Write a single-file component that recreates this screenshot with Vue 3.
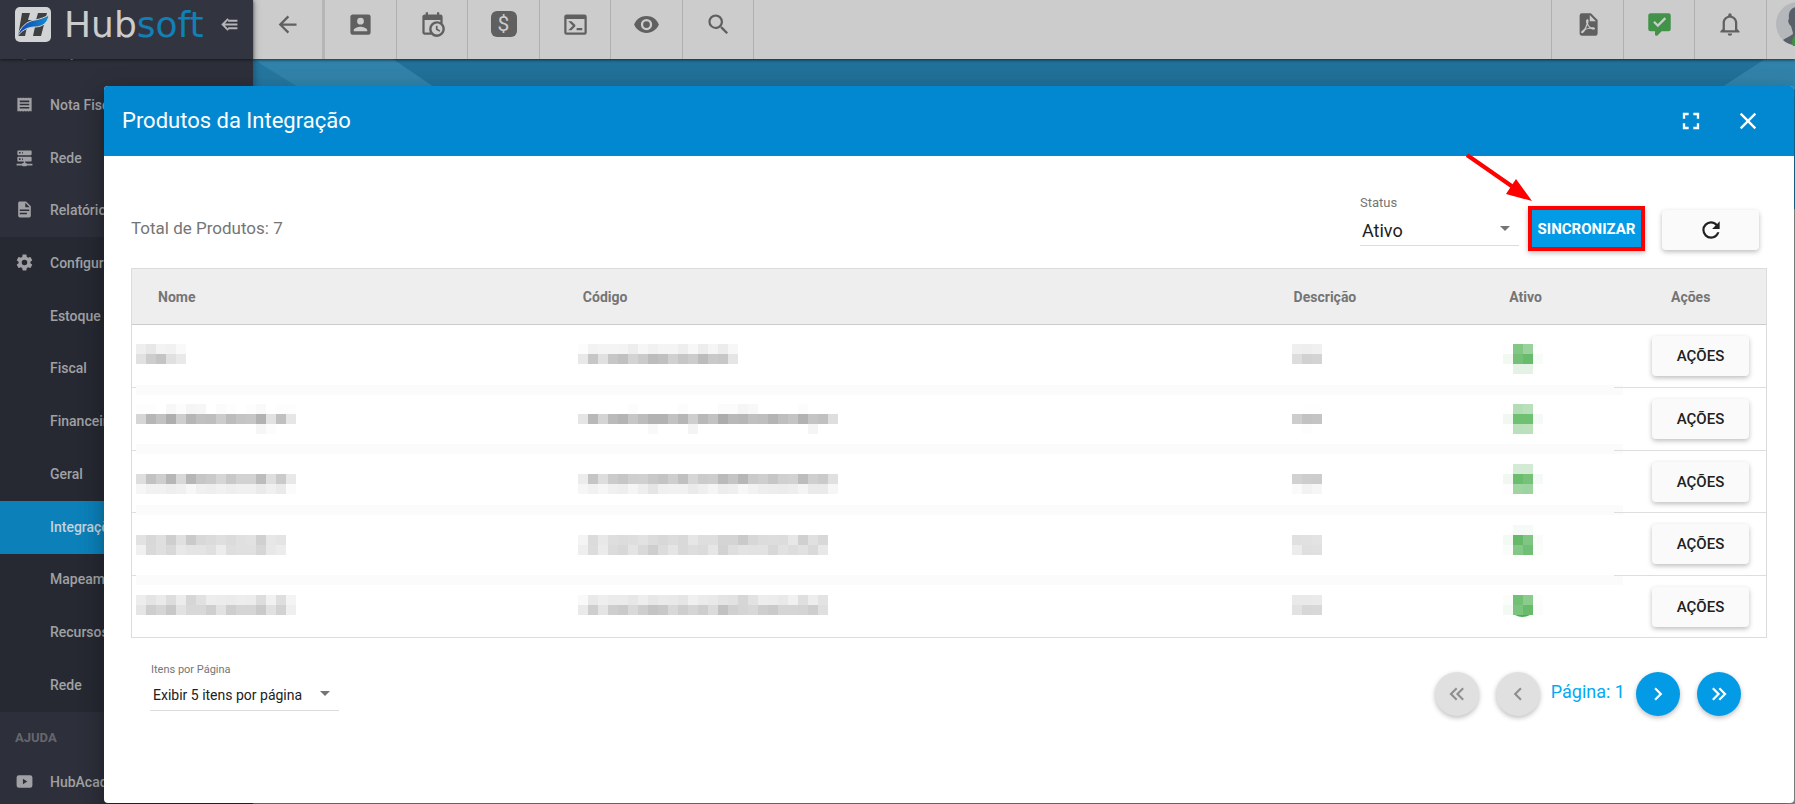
<script setup>
import { ref } from 'vue'

const icons = {
  back: 'M20,11V13H8L13.5,18.5L12.08,19.92L4.16,12L12.08,4.08L13.5,5.5L8,11H20Z',
  account: 'M6,17C6,15 10,13.9 12,13.9C14,13.9 18,15 18,17V18H6M15,9A3,3 0 0,1 12,12A3,3 0 0,1 9,9A3,3 0 0,1 12,6A3,3 0 0,1 15,9M3,5V19A2,2 0 0,0 5,21H19A2,2 0 0,0 21,19V5A2,2 0 0,0 19,3H5C3.89,3 3,3.9 3,5Z',
  calendar: 'M15,13H16.5V15.82L18.94,17.23L18.19,18.53L15,16.69V13M19,8H5V19H9.67C9.24,18.09 9,17.07 9,16A7,7 0 0,1 16,9C17.07,9 18.09,9.24 19,9.67V8M5,21C3.89,21 3,20.1 3,19V5C3,3.89 3.89,3 5,3H6V1H8V3H16V1H18V3H19A2,2 0 0,1 21,5V11.1C22.24,12.36 23,14.09 23,16A7,7 0 0,1 16,23C14.09,23 12.36,22.24 11.1,21H5M16,11.15A4.85,4.85 0 0,0 11.15,16C11.15,18.68 13.32,20.85 16,20.85A4.85,4.85 0 0,0 20.85,16C20.85,13.32 18.68,11.15 16,11.15Z',
  console: 'M20,19V7H4V19H20M20,3A2,2 0 0,1 22,5V19A2,2 0 0,1 20,21H4A2,2 0 0,1 2,19V5C2,3.89 2.9,3 4,3H20M13,17V15H18V17H13M9.58,13L5.57,9H8.4L11.7,12.3C12.09,12.69 12.09,13.33 11.7,13.72L8.42,17H5.59L9.58,13Z',
  eye: 'M12,9A3,3 0 0,0 9,12A3,3 0 0,0 12,15A3,3 0 0,0 15,12A3,3 0 0,0 12,9M12,17A5,5 0 0,1 7,12A5,5 0 0,1 12,7A5,5 0 0,1 17,12A5,5 0 0,1 12,17M12,4.5C7,4.5 2.73,7.61 1,12C2.73,16.39 7,19.5 12,19.5C17,19.5 21.27,16.39 23,12C21.27,7.61 17,4.5 12,4.5Z',
  search: 'M9.5,3A6.5,6.5 0 0,1 16,9.5C16,11.11 15.41,12.59 14.44,13.73L14.71,14H15.5L20.5,19L19,20.5L14,15.5V14.71L13.73,14.44C12.59,15.41 11.11,16 9.5,16A6.5,6.5 0 0,1 3,9.5A6.5,6.5 0 0,1 9.5,3M9.5,5C7,5 5,7 5,9.5C5,12 7,14 9.5,14C12,14 14,12 14,9.5C14,7 12,5 9.5,5Z',
  pdf: 'M14,9H19.5L14,3.5V9M7,2H15L21,8V20A2,2 0 0,1 19,22H7C5.89,22 5,21.1 5,20V4A2,2 0 0,1 7,2M11.93,12.44C12.34,13.34 12.86,14.08 13.46,14.59L13.87,14.91C13,15.07 11.8,15.35 10.53,15.84V15.84L10.42,15.88L10.92,14.84C11.37,13.97 11.7,13.18 11.93,12.44M18.41,16.25C18.59,16.07 18.68,15.84 18.69,15.59C18.72,15.39 18.67,15.2 18.57,15.04C18.28,14.57 17.53,14.35 16.29,14.35L15,14.42L14.13,13.84C13.5,13.32 12.93,12.41 12.53,11.28L12.57,11.14C12.9,9.81 13.21,8.2 12.55,7.54C12.39,7.38 12.17,7.3 11.94,7.3H11.7C11.33,7.3 11,7.69 10.91,8.07C10.54,9.4 10.76,10.13 11.13,11.34V11.35C10.88,12.23 10.56,13.25 10.05,14.28L9.09,16.08L8.2,16.57C7,17.32 6.43,18.16 6.32,18.69C6.28,18.88 6.3,19.05 6.37,19.23L6.4,19.28L6.88,19.59L7.32,19.7C8.13,19.7 9.05,18.75 10.29,16.63L10.47,16.56C11.5,16.23 12.78,16 14.5,15.81C15.53,16.32 16.74,16.55 17.5,16.55C17.94,16.55 18.24,16.44 18.41,16.25Z',
  check: 'M9,22A1,1 0 0,1 8,21V18H4A2,2 0 0,1 2,16V4C2,2.89 2.9,2 4,2H20A2,2 0 0,1 22,4V16A2,2 0 0,1 20,18H13.9L10.2,21.71C10,21.9 9.75,22 9.5,22H9M10.5,14.4L17.9,7L16.5,5.6L10.5,11.6L7.8,8.9L6.4,10.3L10.5,14.4Z',
  bell: 'M16,17H7V10.5C7,8 9,6 11.5,6C14,6 16,8 16,10.5M18,16V10.5C18,7.43 15.86,4.86 13,4.18V3.5A1.5,1.5 0 0,0 11.5,2A1.5,1.5 0 0,0 10,3.5V4.18C7.13,4.86 5,7.43 5,10.5V16L3,18V19H20V18M11.5,22A2,2 0 0,0 13.5,20H9.5A2,2 0 0,0 11.5,22Z',
  help: 'M12,2A10,10 0 1,0 12,22A10,10 0 1,0 12,2Z',
  receipt: 'M3,3L4,4L5,3L6,4L7,3L8,4L9,3L10,4L11,3L12,4L13,3L14,4L15,3L16,4L17,3L18,4L19,3L20,4L21,3V21L20,20L19,21L18,20L17,21L16,20L15,21L14,20L13,21L12,20L11,21L10,20L9,21L8,20L7,21L6,20L5,21L4,20L3,21ZM6,7V9H18V7ZM6,11V13H18V11ZM6,15V17H18V15Z',
  network: 'M13,19H14A1,1 0 0,1 15,20H22V22H15A1,1 0 0,1 14,23H10A1,1 0 0,1 9,22H2V20H9A1,1 0 0,1 10,19H11V17H4A1,1 0 0,1 3,16V12A1,1 0 0,1 4,11H20A1,1 0 0,1 21,12V16A1,1 0 0,1 20,17H13V19M4,3H20A1,1 0 0,1 21,4V8A1,1 0 0,1 20,9H4A1,1 0 0,1 3,8V4A1,1 0 0,1 4,3M9,7H10V5H9V7M9,15H10V13H9V15M5,5V7H7V5H5M5,13V15H7V13H5Z',
  file: 'M13,9H18.5L13,3.5V9M6,2H14L20,8V20A2,2 0 0,1 18,22H6C4.89,22 4,21.1 4,20V4C4,2.89 4.89,2 6,2M15,18V16H6V18H15M18,14V12H6V14H18Z',
  gear: 'M12,15.5A3.5,3.5 0 0,1 8.5,12A3.5,3.5 0 0,1 12,8.5A3.5,3.5 0 0,1 15.5,12A3.5,3.5 0 0,1 12,15.5M19.43,12.97C19.47,12.65 19.5,12.33 19.5,12C19.5,11.67 19.47,11.34 19.43,11L21.54,9.37C21.73,9.22 21.78,8.95 21.66,8.73L19.66,5.27C19.54,5.05 19.27,4.96 19.05,5.05L16.56,6.05C16.04,5.66 15.5,5.32 14.87,5.07L14.5,2.42C14.46,2.18 14.25,2 14,2H10C9.75,2 9.54,2.18 9.5,2.42L9.13,5.07C8.5,5.32 7.96,5.66 7.44,6.05L4.95,5.05C4.73,4.96 4.46,5.05 4.34,5.27L2.34,8.73C2.21,8.95 2.27,9.22 2.46,9.37L4.57,11C4.53,11.34 4.5,11.67 4.5,12C4.5,12.33 4.53,12.65 4.57,12.97L2.46,14.63C2.27,14.78 2.21,15.05 2.34,15.27L4.34,18.73C4.46,18.95 4.73,19.03 4.95,18.95L7.44,17.94C7.96,18.34 8.5,18.68 9.13,18.93L9.5,21.58C9.54,21.82 9.75,22 10,22H14C14.25,22 14.46,21.82 14.5,21.58L14.87,18.93C15.5,18.67 16.04,18.34 16.56,17.94L19.05,18.95C19.27,19.03 19.54,18.95 19.66,18.73L21.66,15.27C21.78,15.05 21.73,14.78 21.54,14.63L19.43,12.97Z',
  video: 'M5,4H19A3,3 0 0,1 22,7V17A3,3 0 0,1 19,20H5A3,3 0 0,1 2,17V7A3,3 0 0,1 5,4M10,8.5V15.5L15.5,12Z',
  refresh: 'M17.65,6.35C16.2,4.9 14.21,4 12,4A8,8 0 0,0 4,12A8,8 0 0,0 12,20C15.73,20 18.84,17.45 19.73,14H17.65C16.83,16.33 14.61,18 12,18A6,6 0 0,1 6,12A6,6 0 0,1 12,6C13.66,6 15.14,6.69 16.22,7.78L13,11H20V4L17.65,6.35Z',
  expand: 'M5,5H10V7H7V10H5V5M14,5H19V10H17V7H14V5M17,14H19V19H14V17H17V14M10,17V19H5V14H7V17H10Z',
  close: 'M19,6.41L17.59,5L12,10.59L6.41,5L5,6.41L10.59,12L5,17.59L6.41,19L12,13.41L17.59,19L19,17.59L13.41,12L19,6.41Z',
  first: 'M18.41,7.41L17,6L11,12L17,18L18.41,16.59L13.83,12L18.41,7.41M12.41,7.41L11,6L5,12L11,18L12.41,16.59L7.83,12L12.41,7.41Z',
  prev: 'M15.41,16.58L10.83,12L15.41,7.41L14,6L8,12L14,18L15.41,16.58Z',
  next: 'M8.59,16.58L13.17,12L8.59,7.41L10,6L16,12L10,18L8.59,16.58Z',
  last: 'M5.59,7.41L7,6L13,12L7,18L5.59,16.59L10.17,12L5.59,7.41M11.59,7.41L13,6L19,12L13,18L11.59,16.59L16.17,12L11.59,7.41Z',
}

const shortcuts = [
  { icon: 'account', label: 'Clientes' },
  { icon: 'calendar', label: 'Agenda' },
  { icon: 'money', label: 'Financeiro' },
  { icon: 'console', label: 'Console' },
  { icon: 'eye', label: 'Visualizar' },
  { icon: 'search', label: 'Pesquisar' },
]
const tools = [
  { icon: 'pdf', label: 'Relatórios em PDF' },
  { icon: 'check', label: 'Mensagens' },
  { icon: 'bell', label: 'Notificações' },
]
const menu = [
  { icon: 'receipt', label: 'Nota Fiscal' },
  { icon: 'network', label: 'Rede' },
  { icon: 'file', label: 'Relatórios' },
]
const settings = ['Estoque', 'Fiscal', 'Financeiro', 'Geral', 'Integrações', 'Mapeamento', 'Recursos', 'Rede']
const columns = ['Nome', 'Código', 'Descrição', 'Ativo', 'Ações']

const status = ref('Ativo')
const pageSize = ref('Exibir 5 itens por página')

// Masked values: each field is a stack of tile rows, 10px per tile.
// Numbers are grey levels, strings are colours, 255 is blank.
const _ = 255
const products = [
  {
    top: 19,
    cells: [
      [[238, 231, 243, 241, 249], [225, 205, 196, 224, 233]],
      [[252, 242, 244, 244, 243, 237, 246, 241, 244, 244, 238, 247, 237, 245, 236, 247], [232, 198, 224, 198, 192, 211, 202, 188, 192, 208, 198, 204, 188, 201, 199, 229]],
      [[239, 238, 240], [221, 209, 211]],
      [[254, '#83c785', '#9ad19c', 254], ['#f1f9f1', '#74c077', '#68bb6a', '#f8fcf8'], [_, '#e3f2e4', '#e3f2e4', _]],
    ],
  },
  {
    top: 16,
    cells: [
      [[253, 253, _, 247, 252, 245, 246, _, 251, 253, _, 253, 249, _, 253, 253], [214, 182, 194, 174, 206, 182, 192, 190, 204, 188, 196, 198, 178, 226, 192, 230], [_, _, _, _, _, _, _, _, _, _, _, _, 246, 252]],
      [[_, _, _, _, _, 252, _, _, _, _, 252, _, _, _, 251, 251, 245, 248, _, _, _, _, 252], [229, 184, 212, 186, 180, 198, 188, 178, 178, 194, 182, 206, 184, 194, 172, 184, 182, 192, 190, 180, 190, 196, 178, 196, 192, 222], [_, _, _, _, _, _, _, 249, _, _, _, 244, _, _, _, _, _, _, _, _, _, _, _, 245]],
      [[_, 254, 254], [205, 194, 196], [_, 253, _]],
      [[_, '#b3deb5', '#badfbb', _], ['#f1f8f1', '#70c072', '#70c072', '#f5faf6'], [254, '#b9e0ba', '#bbe1bc', 254]],
    ],
  },
  {
    top: 13,
    cells: [
      [[], [222, 194, 206, 182, 216, 182, 198, 202, 214, 200, 210, 210, 188, 222, 202, 232], [246, 241, 241, 238, 240, 247, 240, 238, 241, 238, 240, 240, 234, 240, 234, 251]],
      [[], [236, 197, 221, 203, 198, 207, 208, 200, 196, 206, 192, 214, 203, 205, 186, 196, 182, 202, 206, 198, 208, 210, 188, 207, 202, 224], [246, 241, 246, 240, 238, 245, 238, 229, 240, 241, 241, 234, 239, 245, 237, 239, 247, 242, 238, 237, 236, 238, 244, 234, 234, 246]],
      [[], [209, 205, 204], [250, 242, 246]],
      [[_, '#d3ebd4', '#d3ebd4', _], ['#f1f8f1', '#6abd6d', '#76c279', '#f5faf6'], [253, '#9fd5a1', '#9cd39e', 254]],
    ],
  },
  {
    top: 12,
    cells: [
      [[], [226, 216, 223, 206, 224, 202, 216, 219, 223, 219, 224, 226, 208, 231, 228], [240, 217, 223, 216, 232, 228, 228, 224, 236, 222, 224, 224, 214, 232, 236]],
      [[], [244, 219, 232, 222, 220, 222, 226, 220, 216, 220, 217, 230, 222, 222, 212, 212, 202, 215, 220, 221, 220, 231, 208, 224, 216], [238, 220, 235, 219, 216, 228, 217, 206, 220, 229, 217, 221, 219, 230, 210, 222, 227, 226, 226, 216, 225, 221, 225, 217, 232]],
      [[], [224, 225, 227], [236, 223, 224]],
      [[_, '#f5faf6', '#f5faf6', _], ['#f3f9f3', '#65b968', '#80c583', '#fafcfa'], ['#f9fcf9', '#84c887', '#71bf74', '#fbfdfb']],
    ],
  },
  {
    top: 19,
    arc: true,
    cells: [
      [[237, 228, 234, 221, 236, 214, 225, 237, 236, 235, 237, 236, 221, 241, 222, 244], [229, 206, 213, 200, 226, 216, 216, 207, 226, 206, 213, 213, 202, 225, 210, 239]],
      [[249, 233, 238, 235, 235, 231, 238, 231, 234, 233, 229, 240, 235, 233, 228, 226, 214, 226, 237, 236, 233, 241, 223, 237, 227], [234, 206, 228, 206, 202, 217, 206, 196, 200, 216, 206, 213, 206, 219, 194, 208, 213, 216, 206, 202, 213, 213, 212, 206, 223]],
      [[233, 233, 234], [226, 215, 216]],
      [['#fbfdfb', '#72c075', '#8bcb8d', 253], ['#f3faf3', '#7bc47e', '#69bb6c', '#fbfdfb']],
    ],
  },
]

const tileColor = (v) => (typeof v === 'string' ? v : `rgb(${v},${v},${v})`)
const tiles = (rows, top) =>
  rows.flatMap((row, r) =>
    row.map((v, c) => ({ x: c * 10, y: top + r * 10, fill: tileColor(v), blank: v === _ })),
  ).filter((t) => !t.blank)
</script>

<template>
  <div class="app">
    <aside class="sidebar">
      <div class="brand">
        <svg class="logo" viewBox="0 0 36 35" aria-hidden="true">
          <defs>
            <linearGradient id="swoosh" x1="0" x2="1" y1="0" y2="0">
              <stop offset="0" stop-color="#0b3fb4" />
              <stop offset="1" stop-color="#168fcb" />
            </linearGradient>
          </defs>
          <rect width="36" height="35" rx="5" fill="#d2d3d4" />
          <path d="M7 6H15L13 13H21L23 6H32L26 29H18L20 20H12L10 29H3Z" fill="#3f3f40" />
          <path d="M2 30C5 20 12 14 20 13C26 12 30 10 34 8C33 16 27 20 20 20C12 20 6 24 2 30Z" fill="url(#swoosh)" stroke="#d2d3d4" stroke-width="1" />
        </svg>
        <span class="wordmark">Hub<span class="soft">soft</span></span>
        <button class="collapse" type="button" aria-label="Recolher menu">
          <svg viewBox="0 0 18 14" aria-hidden="true">
            <path d="M7 1L1 7L7 13M1 7H17M7 3H17M7 11H17" fill="none" stroke="currentColor" stroke-width="2" />
          </svg>
        </button>
      </div>
      <nav class="menu" aria-label="Menu principal">
        <a href="#" class="item clipped">
          <svg class="glyph" viewBox="0 0 24 24" aria-hidden="true"><path :d="icons.help" /></svg>Empresa
        </a>
        <ul class="top-items">
          <li v-for="m in menu" :key="m.label">
            <a href="#" class="item">
              <svg class="glyph" viewBox="0 0 24 24" aria-hidden="true"><path fill-rule="evenodd" :d="icons[m.icon]" /></svg>{{ m.label }}
            </a>
          </li>
        </ul>
        <div class="open-group">
          <a href="#" class="item parent">
            <svg class="glyph" viewBox="0 0 24 24" aria-hidden="true"><path :d="icons.gear" /></svg>Configurações
          </a>
          <ul class="sub-items">
            <li v-for="s in settings" :key="s" :class="{ active: s === 'Integrações' }">
              <a href="#" class="item sub">{{ s }}</a>
            </li>
          </ul>
        </div>
        <h2 class="caption">AJUDA</h2>
        <a href="#" class="item academy">
          <svg class="glyph" viewBox="0 0 24 24" aria-hidden="true"><path fill-rule="evenodd" :d="icons.video" /></svg>HubAcademy
        </a>
      </nav>
    </aside>

    <div class="page">
      <header class="toolbar">
        <button class="tool back" type="button" aria-label="Voltar">
          <svg viewBox="0 0 24 24" aria-hidden="true"><path :d="icons.back" /></svg>
        </button>
        <div class="tools">
          <button v-for="s in shortcuts" :key="s.icon" class="tool" type="button" :aria-label="s.label">
            <span v-if="s.icon === 'money'" class="money">$</span>
            <svg v-else viewBox="0 0 24 24" aria-hidden="true"><path :d="icons[s.icon]" /></svg>
          </button>
        </div>
        <div class="tools right">
          <button v-for="t in tools" :key="t.icon" class="tool" :class="t.icon" type="button" :aria-label="t.label">
            <svg viewBox="0 0 24 24" aria-hidden="true"><path fill-rule="evenodd" :d="icons[t.icon]" /></svg>
          </button>
          <button class="avatar" type="button" aria-label="Perfil">
            <svg viewBox="0 0 44 44" aria-hidden="true">
              <circle cx="22" cy="22" r="22" fill="#b5b8bb" />
              <path d="M22 5C15 5 12 10 13 17C11 18 13 23 15 24C16 28 17 30 17 32C13 35 9 36 7 38C14 45 30 45 37 38C35 36 31 35 27 32C28 28 31 23 31 17C31 9 28 5 22 5Z" fill="#596069" />
              <circle cx="24" cy="40" r="8" fill="#3f9244" />
            </svg>
          </button>
        </div>
      </header>
      <div class="hero">
        <svg class="facet" viewBox="0 0 200 30" aria-hidden="true">
          <path d="M0 0H140L184 30H0Z" fill="#3183ab" />
          <path d="M0 0L48 30H0Z" fill="#2577a0" />
        </svg>
        <svg class="facet" viewBox="0 0 200 30" aria-hidden="true">
          <path d="M170 0H200V30H124Z" fill="#3183ab" />
        </svg>
      </div>
    </div>

    <section class="dialog" role="dialog" aria-labelledby="dialog-title">
      <header class="dialog-head">
        <h1 id="dialog-title">Produtos da Integração</h1>
        <button type="button" aria-label="Tela cheia">
          <svg viewBox="0 0 24 24" aria-hidden="true"><path :d="icons.expand" /></svg>
        </button>
        <button type="button" aria-label="Fechar">
          <svg viewBox="0 0 24 24" aria-hidden="true"><path :d="icons.close" /></svg>
        </button>
      </header>

      <div class="dialog-body">
        <div class="controls">
          <p class="total">Total de Produtos: 7</p>
          <div class="field status">
            <label for="status">Status</label>
            <select id="status" v-model="status">
              <option>Ativo</option>
              <option>Inativo</option>
            </select>
            <svg class="caret" viewBox="0 0 10 5" aria-hidden="true"><path d="M0 0H10L5 5Z" /></svg>
          </div>
          <div class="marked">
            <button class="sync" type="button">SINCRONIZAR</button>
            <svg class="pointer" viewBox="0 0 68 49" aria-hidden="true">
              <path d="M2 2L48 34" stroke="#f00" stroke-width="4" />
              <path d="M67 48L41 41L51 26Z" fill="#f00" />
            </svg>
          </div>
          <button class="raised" type="button" aria-label="Atualizar">
            <svg viewBox="0 0 24 24" aria-hidden="true"><path :d="icons.refresh" /></svg>
          </button>
        </div>

        <table>
          <colgroup>
            <col class="c-name" /><col class="c-code" /><col class="c-desc" /><col class="c-active" /><col />
          </colgroup>
          <thead>
            <tr><th v-for="c in columns" :key="c" scope="col">{{ c }}</th></tr>
          </thead>
          <tbody>
            <tr v-for="(p, i) in products" :key="i">
              <td v-for="(rows, c) in p.cells" :key="c" class="masked">
                <svg width="270" height="60" role="img" aria-label="Conteúdo oculto">
                  <rect v-for="t in tiles(rows, p.top)" :key="`${t.x}-${t.y}`" :x="t.x" :y="t.y" width="10" height="10" :fill="t.fill" />
                  <path v-if="p.arc && c === 3" d="M12 39H27Q19 43 12 39Z" fill="#4caf50" />
                </svg>
              </td>
              <td class="actions"><button class="raised" type="button">AÇÕES</button></td>
            </tr>
          </tbody>
        </table>

        <footer class="foot">
          <div class="field per-page">
            <label for="per-page">Itens por Página</label>
            <select id="per-page" v-model="pageSize">
              <option>Exibir 5 itens por página</option>
              <option>Exibir 10 itens por página</option>
            </select>
            <svg class="caret" viewBox="0 0 10 5" aria-hidden="true"><path d="M0 0H10L5 5Z" /></svg>
          </div>
          <nav class="pager" aria-label="Paginação">
            <div class="pair">
              <button type="button" disabled aria-label="Primeira página"><svg viewBox="0 0 24 24"><path :d="icons.first" /></svg></button>
              <button type="button" disabled aria-label="Página anterior"><svg viewBox="0 0 24 24"><path :d="icons.prev" /></svg></button>
            </div>
            <span class="current">Página: 1</span>
            <div class="pair">
              <button type="button" aria-label="Próxima página"><svg viewBox="0 0 24 24"><path :d="icons.next" /></svg></button>
              <button type="button" aria-label="Última página"><svg viewBox="0 0 24 24"><path :d="icons.last" /></svg></button>
            </div>
          </nav>
        </footer>
      </div>
    </section>
  </div>
</template>

<style>
body {
  margin: 0;
  background: #949494;
}
</style>

<style scoped>
.app {
  position: relative;
  display: flex;
  height: 100vh;
  overflow: hidden;
  font-family: Roboto, "Liberation Sans", sans-serif;
}
*,
*::before {
  box-sizing: border-box;
}
button,
select {
  font-family: inherit;
  border: 0;
  padding: 0;
  margin: 0;
  cursor: pointer;
}
svg {
  display: block;
  fill: currentColor;
}
ul {
  list-style: none;
  margin: 0;
  padding: 0;
}

/* Sidebar */
.sidebar {
  flex: none;
  width: 253px;
  display: flex;
  flex-direction: column;
  background: #2d2f3a;
  box-shadow: 0 0 8px rgba(0, 0, 0, 0.4);
  z-index: 1;
}
.brand {
  flex: none;
  display: flex;
  align-items: center;
  height: 59px;
  padding: 0 14px 10px 15px;
  background: #32353f;
  box-shadow: 0 1px 3px rgba(0, 0, 0, 0.5);
  z-index: 1;
}
.logo {
  width: 36px;
  height: 35px;
}
.wordmark {
  flex: 1;
  margin-left: 13px;
  font-family: "DejaVu Sans", sans-serif;
  font-size: 36px;
  line-height: 40px;
  color: #ccc;
}
.soft {
  color: #127fb6;
}
.collapse {
  background: none;
  color: #b4b5b8;
}
.collapse svg {
  width: 18px;
  height: 13px;
}
.menu {
  flex: 1;
  min-height: 0;
  overflow: hidden;
  display: flex;
  flex-direction: column;
}
.menu > * {
  flex: none;
}
.item {
  display: flex;
  align-items: center;
  height: 53px;
  padding: 0 0 2px 15px;
  color: #a0a1a4;
  font-size: 14px;
  font-weight: 500;
  text-decoration: none;
}
.item.sub {
  height: 100%;
  padding-left: 50px;
}
.glyph {
  width: 19px;
  height: 19px;
  margin-right: 16px;
}
.clipped {
  margin-top: -33px;
}
.top-items li,
.sub-items li {
  height: 53px;
}
.top-items li:nth-child(2),
.sub-items li:nth-child(4n + 2) {
  height: 52px;
}
.open-group {
  background: #262932;
}
.sub-items .active {
  background: #0c80b9;
}
.active .item {
  color: #c4d3dc;
}
.caption {
  margin: 0;
  padding-left: 15px;
  font-size: 13px;
  font-weight: 700;
  line-height: 52px;
  color: #66676e;
}
.academy {
  height: 37px;
}

/* Page behind the dialog */
.page {
  flex: 1;
  min-width: 0;
}
.toolbar {
  position: relative;
  display: flex;
  height: 59px;
  background: #ccc;
  box-shadow: 0 1px 3px rgba(0, 0, 0, 0.6);
  overflow-x: clip;
}
.tools {
  display: flex;
}
.tools.right {
  margin-left: auto;
  border-left: 1px solid #b0b0b0;
}
.tool {
  width: 72px;
  display: flex;
  justify-content: center;
  align-items: flex-start;
  padding-top: 11px;
  background: none;
  border-right: 1px solid #b0b0b0;
  color: #606060;
}
.tool:nth-child(even) {
  width: 71px;
}
.tool.back {
  width: 72px;
  border-right: 3px solid #b5b5b5;
}
.tool svg {
  width: 27px;
  height: 27px;
}
.tool.check {
  color: #43924a;
}
.money {
  width: 26px;
  height: 26px;
  border-radius: 6px;
  background: #606060;
  color: #ccc;
  font-size: 21px;
  line-height: 26px;
}
.avatar {
  width: 28px;
  overflow: hidden;
  background: none;
  padding: 2px 0 0 9px;
}
.avatar svg {
  width: 44px;
  height: 44px;
  margin-bottom: 13px;
}
.hero {
  display: flex;
  justify-content: space-between;
  height: 150px;
  background: #21719a;
}
.facet {
  width: 200px;
  height: 30px;
}

/* Dialog */
.dialog {
  position: absolute;
  inset: 86px 1px 1px 104px;
  z-index: 2;
  border-radius: 4px;
  background: #fff;
  box-shadow: 0 7px 8px -4px rgba(0, 0, 0, 0.2), 0 13px 19px 2px rgba(0, 0, 0, 0.14), 0 5px 24px 4px rgba(0, 0, 0, 0.12);
}
.dialog-head {
  display: flex;
  align-items: center;
  gap: 29px;
  height: 70px;
  padding: 0 32px 0 18px;
  border-radius: 4px 4px 0 0;
  background: #0288d1;
  color: #fff;
}
.dialog-head h1 {
  flex: 1;
  margin: 0;
  padding-bottom: 2px;
  font-size: 22px;
  font-weight: 400;
}
.dialog-head button {
  background: none;
  color: #fff;
}
.dialog-head svg {
  width: 28px;
  height: 28px;
}
.dialog-body {
  padding: 0 27px;
}
.controls {
  display: flex;
  align-items: center;
  height: 112px;
  padding: 36px 8px 0 0;
}
.total {
  flex: 1;
  margin: 0;
  padding-bottom: 4px;
  font-size: 17px;
  color: #757575;
}
.field {
  position: relative;
  display: flex;
  flex-direction: column;
  color: #757575;
}
.field select {
  appearance: none;
  background: none;
  border-bottom: 1px solid #dcdcdc;
  border-radius: 0;
  padding: 0 0 0 2px;
  color: #212121;
}
.caret {
  position: absolute;
  right: 9px;
  bottom: 15px;
  width: 10px;
  height: 5px;
  pointer-events: none;
}
.status {
  align-self: flex-end;
  width: 159px;
  margin: 0 9px 22px 0;
  font-size: 13px;
}
.status label {
  line-height: 18px;
  padding-bottom: 4px;
}
.status select {
  height: 30px;
  font-size: 18px;
}
.marked {
  position: relative;
  margin: 0 17px 3px 0;
  border: 4px solid #f00;
  box-shadow: 0 2px 5px rgba(0, 0, 0, 0.26);
}
.sync {
  display: block;
  width: 109px;
  height: 37px;
  background: #039be5;
  color: #fff;
  font-size: 15px;
  font-weight: 700;
}
.pointer {
  position: absolute;
  right: 108px;
  bottom: 45px;
  width: 68px;
  height: 49px;
}
.raised {
  display: flex;
  align-items: center;
  justify-content: center;
  width: 97px;
  height: 40px;
  border-radius: 4px;
  background: #fafafa;
  color: #212121;
  font-size: 15px;
  font-weight: 500;
  box-shadow: 0 2px 5px rgba(0, 0, 0, 0.26);
}
.raised svg {
  width: 26px;
  height: 26px;
}

/* Table */
table {
  width: 100%;
  table-layout: fixed;
  border: 1px solid #dcdcdc;
  border-collapse: separate;
  border-spacing: 0;
}
.c-name {
  width: 26%;
}
.c-code {
  width: 43.5%;
}
.c-desc {
  width: 13.2%;
}
.c-active {
  width: 8%;
}
th {
  height: 56px;
  padding: 0 0 0 26px;
  background: #eee;
  border-bottom: 1px solid #ccc;
  text-align: left;
  font-size: 14px;
  font-weight: 700;
  color: #757575;
}
th:last-child {
  padding-left: 57px;
}
td {
  position: relative;
  height: 63px;
  padding: 0;
  border-bottom: 1px solid #dedede;
  vertical-align: top;
}
tr:nth-child(3) td {
  height: 62px;
}
tbody tr:last-child td {
  height: 61px;
  border-bottom: 0;
}
.masked svg {
  position: relative;
  z-index: 1;
  margin-left: 21px;
  max-width: calc(100% - 21px);
}
.masked:first-child svg {
  margin-left: 4px;
}
.masked:nth-child(3) svg {
  margin-left: 24px;
}
.masked:nth-child(4) svg {
  margin-left: 20px;
}
.masked::before {
  content: "";
  position: absolute;
  left: 0;
  right: 0;
  bottom: -8px;
  height: 10px;
  background: #fbfbfb;
}
.masked:first-child::before {
  left: 4px;
}
.masked:nth-child(4)::before {
  right: -9px;
}
tr:nth-child(2) .masked::before {
  bottom: -4px;
}
tr:nth-child(3) .masked::before {
  bottom: -3px;
}
tr:nth-child(4) .masked::before {
  bottom: -10px;
}
tr:last-child .masked::before {
  display: none;
}
.actions {
  padding: 11px 17px 0 0;
}
.actions .raised {
  margin-left: auto;
}

/* Footer */
.foot {
  display: flex;
  align-items: flex-start;
  justify-content: space-between;
  padding: 23px 26px 0 19px;
}
.per-page {
  width: 189px;
  font-size: 11px;
}
.per-page label {
  padding-left: 1px;
  line-height: 18px;
}
.per-page select {
  height: 32px;
  padding-left: 3px;
  font-size: 14px;
}
.pager {
  display: flex;
  gap: 11px;
  padding-top: 11px;
}
.pair {
  display: flex;
  gap: 17px;
}
.pager button {
  display: flex;
  align-items: center;
  justify-content: center;
  width: 44px;
  height: 44px;
  border-radius: 50%;
  background: #039be5;
  color: #fff;
  box-shadow: 0 2px 5px rgba(0, 0, 0, 0.26);
}
.pager button:disabled {
  background: #e0e0e0;
  color: #8f8f8f;
}
.pager svg {
  width: 26px;
  height: 26px;
}
.current {
  font-size: 18px;
  line-height: 40px;
  color: #03a9f4;
}
</style>
